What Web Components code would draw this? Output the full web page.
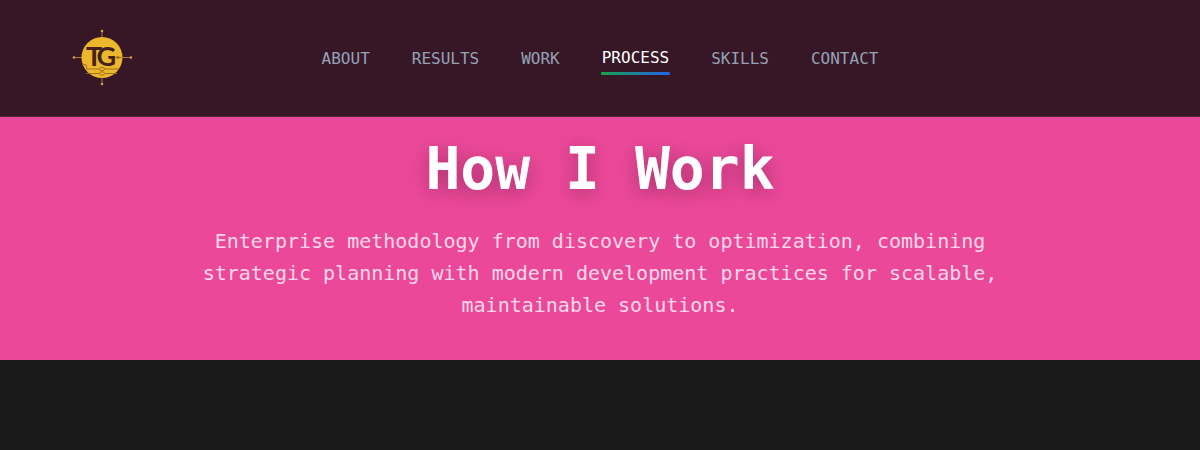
<!DOCTYPE html>
<html lang="en">
<head>
<meta charset="utf-8">
<meta name="viewport" content="width=device-width, initial-scale=1">
<title>How I Work</title>
<style>
  html { background: #1a1a1a; }
  body { margin: 0; font-family: "DejaVu Sans Mono", monospace; }
</style>
</head>
<body>
<site-header>
  <brand-logo slot="brand"></brand-logo>
  <nav-item href="#about">ABOUT</nav-item>
  <nav-item href="#results">RESULTS</nav-item>
  <nav-item href="#work">WORK</nav-item>
  <nav-item href="#process" active>PROCESS</nav-item>
  <nav-item href="#skills">SKILLS</nav-item>
  <nav-item href="#contact">CONTACT</nav-item>
</site-header>
<main>
  <page-hero>
    <span slot="title">How I Work</span>
    Enterprise methodology from discovery to optimization, combining strategic planning with modern development practices for scalable, maintainable solutions.
  </page-hero>
</main>
<script>
const define = (name, html, setup) => {
  const template = document.createElement('template');
  template.innerHTML = html;
  customElements.define(name, class extends HTMLElement {
    constructor() {
      super();
      this.attachShadow({ mode: 'open' }).append(template.content.cloneNode(true));
    }
    connectedCallback() { if (setup) setup(this, this.shadowRoot); }
  });
};

define('site-header', `
  <style>
    :host { display: block; background: #371726; border-bottom: 1px solid #4b2d3b; }
    header { display: grid; grid-template-columns: 1fr auto 1fr; align-items: center; padding: 28px 72px; }
    nav { display: flex; align-items: center; gap: 42px; }
  </style>
  <header>
    <slot name="brand"></slot>
    <nav aria-label="Main"><slot></slot></nav>
  </header>`);

define('nav-item', `
  <style>
    :host { display: block; }
    a { display: block; padding-top: 2px; color: #94a3b8; font-size: 16px; line-height: 24px; text-decoration: none; }
    :host([active]) a { color: #fff; padding: 5px 1px; margin: 0 -1px; position: relative; }
    :host([active]) a::after {
      content: ""; position: absolute; left: 0; right: 0; bottom: 0; height: 3px;
      border-radius: 1px; background: linear-gradient(90deg, #16a34a, #2563eb);
    }
  </style>
  <a><slot></slot></a>`, (host, root) => {
    const a = root.querySelector('a');
    a.href = host.getAttribute('href');
    if (host.hasAttribute('active')) a.setAttribute('aria-current', 'page');
  });

define('brand-logo', `
  <style>
    :host { display: block; }
    a { display: block; width: 60px; height: 60px; }
    svg { display: block; width: 100%; height: 100%; }
    text { font-family: Lato, sans-serif; font-weight: 700; font-size: 27px; fill: #42211f; }
  </style>
  <a href="#home" aria-label="Home">
    <svg viewBox="0 0 60 60" aria-hidden="true">
      <path d="M30 3V56M2 29.5H58" stroke="#a77a2d" fill="none"/>
      <g fill="#d3a23b">
        <circle cx="30" cy="3" r="1.3"/><circle cx="30" cy="56" r="1.3"/>
        <circle cx="2" cy="29.5" r="1.3"/><circle cx="59" cy="29.5" r="1.3"/>
      </g>
      <circle cx="30" cy="29.5" r="20.5" fill="#ecb62d"/>
      <g stroke="#9b6b20" stroke-width=".9" fill="none">
        <path d="M41 29.5H50.5M10 36.5H13Q14.500 36.500 14.500 38V41H27.500M32.500 41H47M14 45.500H27.500M32.500 45.500H45"/>
        <ellipse cx="30" cy="41" rx="2.5" ry="1.7"/><ellipse cx="30" cy="45.500" rx="2.5" ry="1.7"/>
        <circle cx="46" cy="29.5" r="1.2"/>
      </g>
      <text x="14" y="38">T<tspan dx="-5">G</tspan></text>
    </svg>
  </a>`);

define('page-hero', `
  <style>
    :host { display: block; background: #ec4899; text-align: center; }
    section { display: flex; flex-direction: column; align-items: center; gap: 26px; padding: 22px 32px 39px; }
    h1 { margin: 0; color: #fff; font-size: 58px; line-height: 60px; font-weight: 700; text-shadow: 0 4px 20px rgba(0, 0, 0, .3); }
    p { margin: 0; max-width: 800px; color: rgba(255, 255, 255, .8); font-size: 20px; line-height: 32px; }
  </style>
  <section>
    <h1><slot name="title"></slot></h1>
    <p><slot></slot></p>
  </section>`);
</script>
</body>
</html>
